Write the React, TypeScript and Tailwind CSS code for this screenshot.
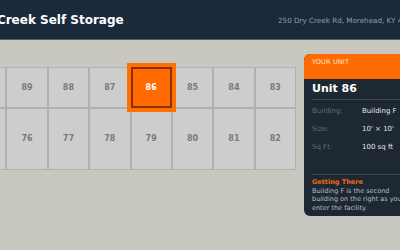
const topRow = [90, 89, 88, 87, 86, 85, 84, 83];
const bottomRow = [75, 76, 77, 78, 79, 80, 81, 82];

const Cell = ({ n, tall, selected }: { n: number; tall?: boolean; selected?: boolean }) => {
	if (selected) {
		return (
			<div className="relative z-10 flex items-center justify-center h-[41px] bg-[#ff6b00] border-2 border-[#8a3000] ring-4 ring-[#ff7000] text-white text-[8px] font-bold">
				{n}
			</div>
		);
	}
	return (
		<div
			className={`flex items-center justify-center bg-[#cdcdcd] border border-[#b1b1b1] text-[#7a7a7a] text-[8px] font-bold ${
				tall ? "h-[62px]" : "h-[41px]"
			}`}
		>
			{n}
		</div>
	);
};

const InfoRow = ({ label, value }: { label: string; value: string }) => (
	<div className="flex h-[18px] items-center text-[7px]">
		<span className="w-[50px] text-[#5f6b78]">{label}</span>
		<span className="text-[#e2e6ea]">{value}</span>
	</div>
);

export default function App() {
	return (
		<div className="w-[400px] h-[250px] overflow-hidden bg-[#c8c8c0] font-['DejaVu_Sans',sans-serif]">
			<div className="w-[500px] -ml-[51px]">
				<header className="flex items-center h-[40px] pl-5 bg-[#1b2a3b] border-b border-[#56606b]">
					<h1 className="w-[309px] shrink-0 text-white text-[12px] font-bold">Dry Creek Self Storage</h1>
					<span className="mt-1 whitespace-nowrap text-[7.2px] text-[#8f9cab]">
						250 Dry Creek Rd, Morehead, KY 40351
					</span>
				</header>

				<main className="flex items-start gap-2 px-4 pt-[14px]">
					<div className="grid grid-cols-8 w-[331px] shrink-0 mt-[13px]">
						{topRow.map((n) => (
							<Cell key={n} n={n} selected={n === 86} />
						))}
						{bottomRow.map((n) => (
							<Cell key={n} n={n} tall />
						))}
					</div>

					<aside className="w-[112px] shrink-0 rounded-md overflow-hidden bg-[#1e2833]">
						<div className="h-[25px] bg-[#ff6b00] px-2 pt-[4px] text-[6.5px] tracking-wide text-[#ffe3cc]">
							YOUR UNIT
						</div>
						<div className="px-2 pb-1">
							<div className="pt-[1px] pb-[1px] leading-[18px] border-b border-[#3a4552] text-white text-[11px] font-bold">
								Unit 86
							</div>
							<div className="pt-[2px]">
								<InfoRow label="Building:" value="Building F" />
								<InfoRow label="Size:" value="10' × 10'" />
								<InfoRow label="Sq Ft:" value="100 sq ft" />
							</div>
							<div className="mt-[18px] pt-[3px] border-t border-[#3a4552]">
								<p className="text-[6.5px] leading-[8.5px] font-bold text-[#ee6b12]">Getting There</p>
								<p className="text-[6.5px] leading-[8.5px] text-[#b4bcc5]">
									Building F is the second building on the right as you enter the facility.
								</p>
							</div>
						</div>
					</aside>
				</main>
			</div>
		</div>
	);
}
